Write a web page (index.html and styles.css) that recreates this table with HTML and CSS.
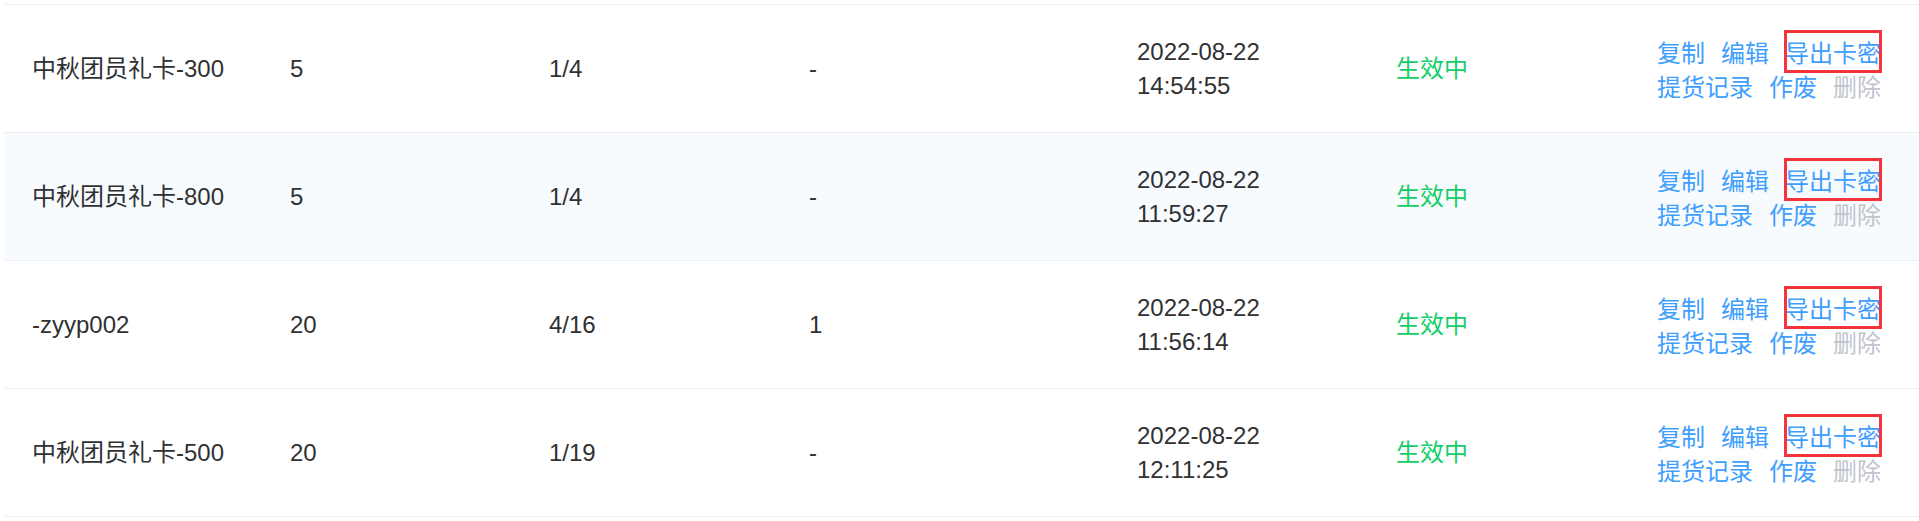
FILE: index.html
```html
<!DOCTYPE html>
<html lang="zh-CN">
<head>
<meta charset="utf-8">
<title>礼卡列表</title>
<link rel="stylesheet" href="styles.css">
</head>
<body>
<div class="table">
  <div class="row">
    <div class="cell">中秋团员礼卡-300</div>
    <div class="cell">5</div>
    <div class="cell">1/4</div>
    <div class="cell">-</div>
    <div class="cell">2022-08-22<br>14:54:55</div>
    <div class="cell status">生效中</div>
    <div class="cell actions">
      <a class="link">复制</a><a class="link">编辑</a><a class="link marked">导出卡密</a><a class="link">提货记录</a><a class="link">作废</a><a class="link disabled">删除</a>
    </div>
  </div>
  <div class="row striped">
    <div class="cell">中秋团员礼卡-800</div>
    <div class="cell">5</div>
    <div class="cell">1/4</div>
    <div class="cell">-</div>
    <div class="cell">2022-08-22<br>11:59:27</div>
    <div class="cell status">生效中</div>
    <div class="cell actions">
      <a class="link">复制</a><a class="link">编辑</a><a class="link marked">导出卡密</a><a class="link">提货记录</a><a class="link">作废</a><a class="link disabled">删除</a>
    </div>
  </div>
  <div class="row">
    <div class="cell">-zyyp002</div>
    <div class="cell">20</div>
    <div class="cell">4/16</div>
    <div class="cell">1</div>
    <div class="cell">2022-08-22<br>11:56:14</div>
    <div class="cell status">生效中</div>
    <div class="cell actions">
      <a class="link">复制</a><a class="link">编辑</a><a class="link marked">导出卡密</a><a class="link">提货记录</a><a class="link">作废</a><a class="link disabled">删除</a>
    </div>
  </div>
  <div class="row">
    <div class="cell">中秋团员礼卡-500</div>
    <div class="cell">20</div>
    <div class="cell">1/19</div>
    <div class="cell">-</div>
    <div class="cell">2022-08-22<br>12:11:25</div>
    <div class="cell status">生效中</div>
    <div class="cell actions">
      <a class="link">复制</a><a class="link">编辑</a><a class="link marked">导出卡密</a><a class="link">提货记录</a><a class="link">作废</a><a class="link disabled">删除</a>
    </div>
  </div>
</div>
</body>
</html>
```

FILE: styles.css
```css
html, body {
  margin: 0;
  padding: 0;
  background: #ffffff;
}

body {
  padding: 4px 0 0 4px;
  font-family: "Liberation Sans", Arial, "Noto Sans CJK SC", sans-serif;
  font-size: 24px;
  line-height: 34px;
  color: #303133;
}

.table {
  border-top: 1px solid #ebeef5;
}

.row {
  display: grid;
  grid-template-columns: 258px 259px 260px 328px 259px 261px 1fr;
  height: 127px;
  border-bottom: 1px solid #ebeef5;
  align-items: center;
}

.row.striped {
  background: #f8fbfe;
}

.cell {
  padding: 0 28px;
  white-space: nowrap;
}

.status {
  color: #13ce66;
}

.actions {
  display: flex;
  flex-wrap: wrap;
  column-gap: 16px;
  max-width: 234px;
  white-space: normal;
}

.link {
  color: #409eff;
  cursor: pointer;
  font-family: "Noto Sans CJK SC", sans-serif;
}

.link.disabled {
  color: #c0c4cc;
}

.marked {
  position: relative;
}

.marked::after {
  content: "";
  position: absolute;
  left: -1px;
  right: -1px;
  top: -5px;
  bottom: -4px;
  border: 3px solid #f5333a;
}
```
